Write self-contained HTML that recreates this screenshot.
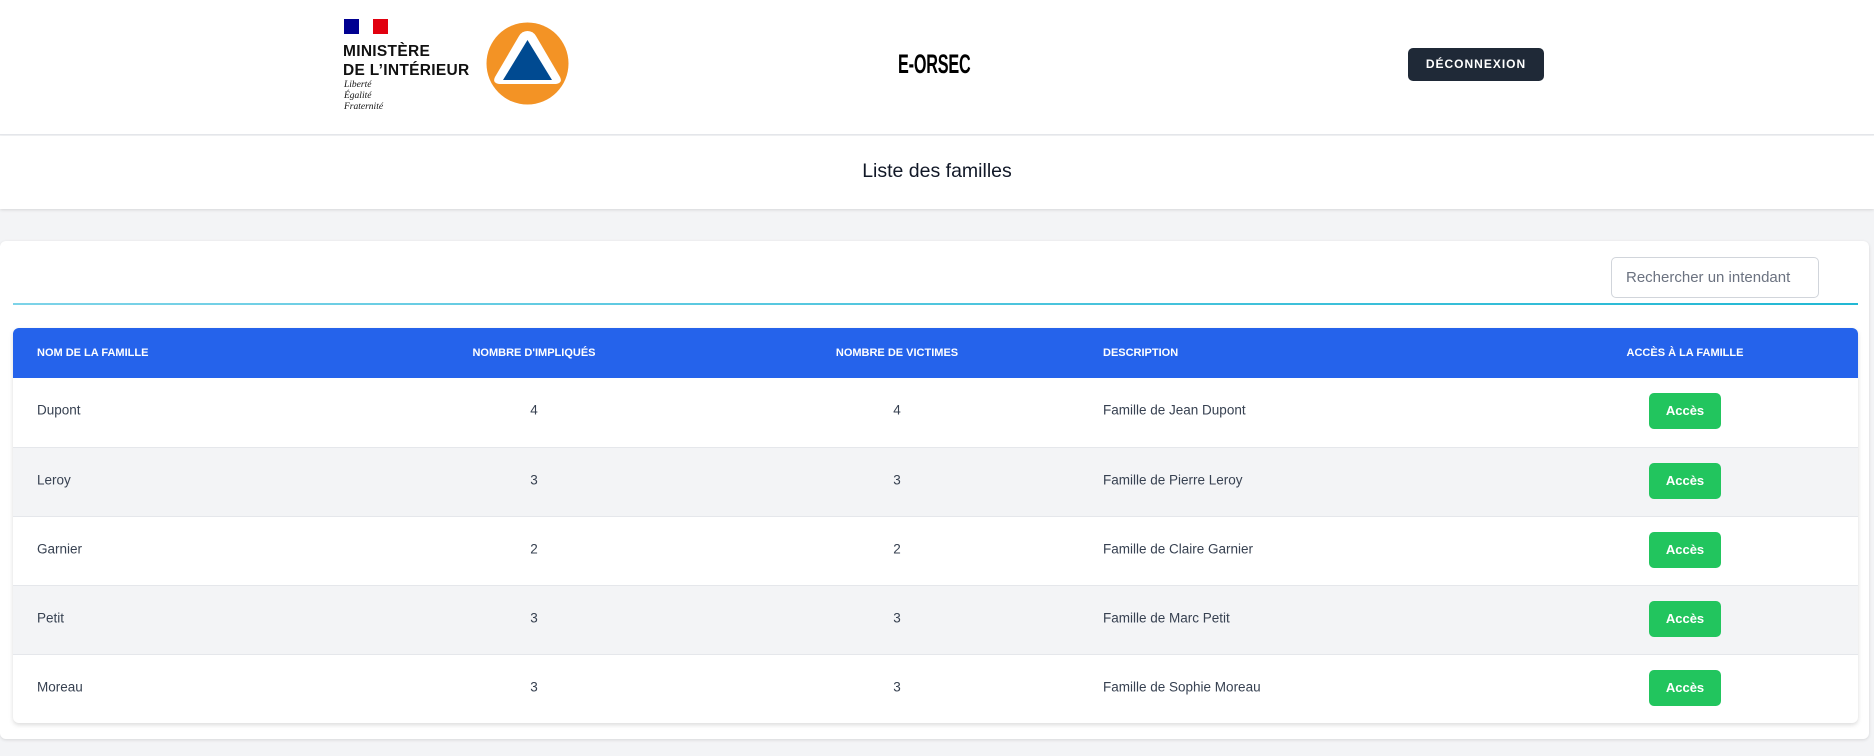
<!DOCTYPE html>
<html><head><meta charset="utf-8"><style>
*{box-sizing:border-box;margin:0;padding:0}
body{width:1874px;height:756px;background:#f3f4f6;font-family:"Liberation Sans",sans-serif;color:#1f2937;position:relative;overflow:hidden}
.hdr{position:absolute;left:0;top:0;width:1874px;height:135px;background:#fff;border-bottom:1px solid #e5e7eb}
.bar{position:absolute;left:0;top:136px;width:1874px;height:73px;background:#fff;box-shadow:0 1px 3px rgba(0,0,0,.12)}
.abs{position:absolute}
.card{position:absolute;left:0;top:241px;width:1869px;height:498px;background:#fff;border-radius:6px;box-shadow:0 1px 3px rgba(0,0,0,.12)}
.tbl{position:absolute;left:13px;top:328px;width:1845px;height:395px;border-radius:6px;box-shadow:0 2px 5px rgba(0,0,0,.14);overflow:hidden;background:#fff}
.th{height:50px;background:#2563eb;color:#fff;font-size:11px;font-weight:bold;position:relative}
.row{height:69px;position:relative;border-top:1px solid #e5e7eb;font-size:13.5px;color:#374151}
.row.g{background:#f3f4f6}
.c{position:absolute;top:47%;transform:translateY(-50%);white-space:nowrap}
.ctr{transform:translate(-50%,-50%)}
.btn{position:absolute;left:1636px;top:48%;transform:translateY(-50%);width:72px;height:36px;background:#22c55e;color:#fff;border-radius:5px;font-weight:bold;font-size:13px;text-align:center;line-height:36px}
</style></head><body>
<div class="hdr">
 <div class="abs" style="left:344px;top:19px;width:15px;height:15px;background:#000091"></div>
 <div class="abs" style="left:359px;top:19px;width:14px;height:15px;background:#fff"></div>
 <div class="abs" style="left:373px;top:19px;width:15px;height:15px;background:#e1000f"></div>
 <div class="abs" style="left:343px;top:42px;font-size:15.5px;font-weight:bold;line-height:19px;color:#111;letter-spacing:.3px">MINISTÈRE<br>DE L’INTÉRIEUR</div>
 <div class="abs" style="left:344px;top:80px;font-family:'Liberation Serif',serif;font-style:italic;font-size:9.5px;line-height:11px;color:#111">Liberté<br>Égalité<br>Fraternité</div>
 <svg class="abs" style="left:486px;top:22px" width="83" height="83" viewBox="0 0 83 83"><circle cx="41.5" cy="41.5" r="41" fill="#f39325"/><path d="M41.5 9 Q47 9 50 14 L74 55 Q77 61 70 62 L13 62 Q6 61 9 55 L33 14 Q36 9 41.5 9Z" fill="#fff"/><polygon points="41.5,18 66,58 17,58" fill="#004a91"/></svg>
 <div class="abs" style="left:898px;top:49px;font-size:27px;font-weight:bold;color:#000;transform:scaleX(.6);transform-origin:left;letter-spacing:-.3px">E-ORSEC</div>
 <div class="abs" style="left:1408px;top:48px;width:136px;height:33px;background:#1f2937;border-radius:5px;color:#fff;font-size:12px;font-weight:bold;letter-spacing:1px;text-align:center;line-height:33px">DÉCONNEXION</div>
</div>
<div class="bar"><div class="abs" style="left:0;width:1874px;top:24px;text-align:center;font-size:19.5px;color:#111827">Liste des familles</div></div>
<div class="card"></div>
<div class="abs" style="left:1611px;top:257px;width:208px;height:41px;border:1px solid #d1d5db;border-radius:5px;font-size:15px;color:#6b7280;line-height:39px;padding-left:14px">Rechercher un intendant</div>
<div class="abs" style="left:13px;top:303px;width:1845px;height:2px;background:linear-gradient(90deg,#7dd3e8,#22b8d4)"></div>
<div class="tbl">
 <div class="th"><span class="c" style="left:24px;top:50%">NOM DE LA FAMILLE</span><span class="c ctr" style="left:521px;top:50%">NOMBRE D'IMPLIQUÉS</span><span class="c ctr" style="left:884px;top:50%">NOMBRE DE VICTIMES</span><span class="c" style="left:1090px;top:50%">DESCRIPTION</span><span class="c ctr" style="left:1672px;top:50%">ACCÈS À LA FAMILLE</span></div>
 <div class="row" style="border-top:none"><span class="c" style="left:24px">Dupont</span><span class="c ctr" style="left:521px">4</span><span class="c ctr" style="left:884px">4</span><span class="c" style="left:1090px">Famille de Jean Dupont</span><div class="btn">Accès</div></div>
 <div class="row g"><span class="c" style="left:24px">Leroy</span><span class="c ctr" style="left:521px">3</span><span class="c ctr" style="left:884px">3</span><span class="c" style="left:1090px">Famille de Pierre Leroy</span><div class="btn">Accès</div></div>
 <div class="row"><span class="c" style="left:24px">Garnier</span><span class="c ctr" style="left:521px">2</span><span class="c ctr" style="left:884px">2</span><span class="c" style="left:1090px">Famille de Claire Garnier</span><div class="btn">Accès</div></div>
 <div class="row g"><span class="c" style="left:24px">Petit</span><span class="c ctr" style="left:521px">3</span><span class="c ctr" style="left:884px">3</span><span class="c" style="left:1090px">Famille de Marc Petit</span><div class="btn">Accès</div></div>
 <div class="row"><span class="c" style="left:24px">Moreau</span><span class="c ctr" style="left:521px">3</span><span class="c ctr" style="left:884px">3</span><span class="c" style="left:1090px">Famille de Sophie Moreau</span><div class="btn">Accès</div></div>
</div>
</body></html>
